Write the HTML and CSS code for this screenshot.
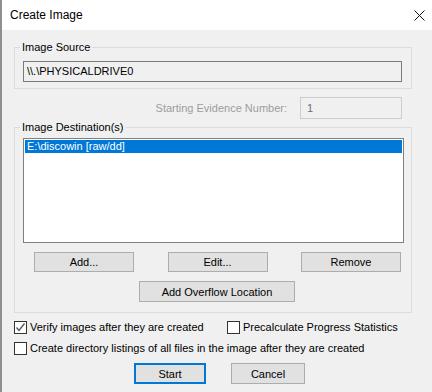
FILE: index.html
```html
<!DOCTYPE html>
<html lang="en">
<head>
    <meta charset="UTF-8">
    <meta name="viewport" content="width=device-width, initial-scale=1.0">
    <title>Create Image</title>
    <link rel="stylesheet" href="styles.css">
</head>
<body>
    <div class="window">
        <div class="titlebar">
            <span class="title">Create Image</span>
            <svg class="close" width="11" height="11" viewBox="0 0 11 11">
                <path d="M0.5 0.5 L10.5 10.5 M10.5 0.5 L0.5 10.5" stroke="#111" stroke-width="1" fill="none"/>
            </svg>
        </div>

        <div class="content">
            <fieldset class="group source">
                <legend>Image Source</legend>
                <div class="textbox">\\.\PHYSICALDRIVE0</div>
            </fieldset>

            <div class="evidence-row">
                <span class="disabled-label">Starting Evidence Number:</span>
                <div class="textbox disabled">1</div>
            </div>

            <fieldset class="group dest">
                <legend>Image Destination(s)</legend>
                <div class="listbox">
                    <div class="list-item selected">E:\discowin [raw/dd]</div>
                </div>
                <div class="button-row">
                    <button>Add...</button>
                    <button>Edit...</button>
                    <button>Remove</button>
                </div>
                <button class="overflow">Add Overflow Location</button>
            </fieldset>

            <div class="check-row">
                <label class="check first">
                    <span class="box">
                        <svg width="11" height="11" viewBox="0 0 11 11">
                            <path d="M1.5 5.5 L4 8.5 L9.5 1.5" stroke="#555" stroke-width="1.3" fill="none"/>
                        </svg>
                    </span>
                    Verify images after they are created
                </label>
                <label class="check">
                    <span class="box"></span>
                    Precalculate Progress Statistics
                </label>
            </div>
            <div class="check-row">
                <label class="check">
                    <span class="box"></span>
                    Create directory listings of all files in the image after they are created
                </label>
            </div>

            <div class="actions">
                <button class="default">Start</button>
                <button class="cancel">Cancel</button>
            </div>
        </div>
    </div>
</body>
</html>
```

FILE: styles.css
```css
html, body {
    margin: 0;
    padding: 0;
}
body {
    width: 432px;
    height: 392px;
    overflow: hidden;
    background-color: #f0f0f0;
    font-family: "Liberation Sans", Arial, sans-serif;
    font-size: 11px;
    color: #000;
}
.window {
    height: 392px;
    box-sizing: border-box;
    border-left: 2px solid #8f8f8f;
    background-color: #f0f0f0;
}
.titlebar {
    height: 30px;
    background: #fff;
    display: flex;
    align-items: center;
    justify-content: space-between;
    padding: 0 7px 0 8px;
}
.title {
    font-size: 12px;
    color: #000;
}
.close {
    display: block;
}
.content {
    padding: 10px 20px 0 12px;
}
.group {
    margin: 0;
    border: 1px solid #dcdcdc;
    padding: 0 9px 6px 8px;
    min-width: 0;
}
.group legend {
    line-height: 14px;
    padding: 0 2px;
    margin-left: -3px;
}
.textbox {
    box-sizing: border-box;
    height: 21px;
    line-height: 19px;
    border: 1px solid #7a7a7a;
    background: #f0f0f0;
    padding-left: 3px;
    margin-top: 7px;
}
.evidence-row {
    margin-top: 8px;
    display: flex;
    justify-content: flex-end;
    align-items: center;
    gap: 13px;
    padding-right: 10px;
}
.disabled-label {
    color: #9d9d9d;
}
.textbox.disabled {
    margin-top: 0;
    width: 102px;
    height: 22px;
    line-height: 20px;
    border-color: #cccccc;
    color: #6d6d6d;
    padding-left: 6px;
}
.dest {
    margin-top: 1px;
    padding-bottom: 10px;
}
.listbox {
    box-sizing: border-box;
    width: 381px;
    height: 105px;
    margin-top: 4px;
    border: 1px solid #7f7f7f;
    background: #fff;
    padding: 1px;
}
.list-item {
    height: 13px;
    line-height: 13px;
    padding-left: 2px;
}
.list-item.selected {
    background: #0078d7;
    color: #fff;
}
button {
    font-family: "Liberation Sans", Arial, sans-serif;
    font-size: 11px;
    color: #000;
    background: #e1e1e1;
    border: 1px solid #adadad;
    padding: 0;
    box-sizing: border-box;
}
.button-row {
    margin: 9px 0 0 11px;
    width: 367px;
    display: flex;
    justify-content: space-between;
}
.button-row button {
    width: 100px;
    height: 20px;
}
.overflow {
    display: block;
    margin: 9px 0 0 116px;
    width: 156px;
    height: 21px;
}
.check-row {
    display: flex;
    margin-top: 8px;
    height: 13px;
}
.check {
    display: flex;
    align-items: center;
    gap: 3px;
    line-height: 13px;
    white-space: nowrap;
}
.check.first {
    width: 213px;
}
.box {
    box-sizing: border-box;
    width: 13px;
    height: 13px;
    border: 1px solid #333;
    background: #fff;
    display: flex;
    align-items: center;
    justify-content: center;
}
.box svg {
    display: block;
}
.actions {
    margin: 8px 0 0 120px;
    display: flex;
    gap: 25px;
}
.actions button {
    height: 21px;
}
.default {
    width: 72px;
    border: 2px solid #0078d7;
}
.cancel {
    width: 74px;
}
```
